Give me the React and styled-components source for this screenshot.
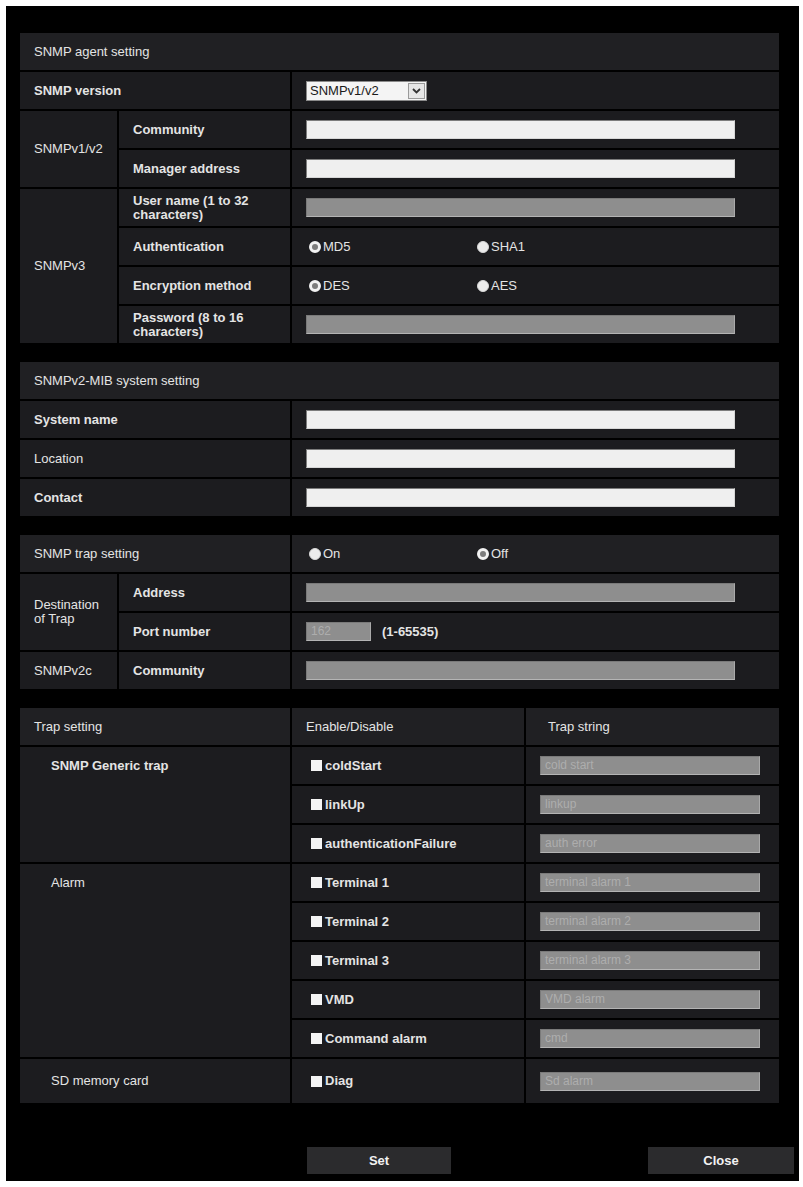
import styled, { createGlobalStyle } from "styled-components";

const GlobalStyle = createGlobalStyle`
  html, body {
    margin: 0;
    padding: 0;
    background: #fff;
  }
  body {
    font-family: "Liberation Sans", Arial, sans-serif;
    font-size: 13px;
    color: #e4e4e4;
  }
`;

const Frame = styled.div`
  margin: 6px 4px 6px 6px;
  height: 1175px;
  box-sizing: border-box;
  background: #000;
  padding: 27px 20px 0 14px;
  display: flex;
  flex-direction: column;
  gap: 19px;
`;

const Section = styled.div`
  display: grid;
  grid-template-columns: ${(p) => p.$cols};
  grid-auto-rows: 37px;
  gap: 2px;
`;

const Cell = styled.div`
  background: ${(p) => (p.$head ? "#202023" : "#1c1c1f")};
  display: flex;
  align-items: ${(p) => (p.$top ? "flex-start" : "center")};
  box-sizing: border-box;
  padding: ${(p) => (p.$top ? "12px" : "0")} 10px 0 ${(p) => p.$indent || 14}px;
  font-weight: ${(p) => (p.$bold ? 700 : 400)};
  line-height: 14px;
  grid-column: ${(p) => (p.$span ? `span ${p.$span}` : "auto")};
  grid-row: ${(p) => (p.$rows ? `span ${p.$rows}` : "auto")};
  ${(p) => p.$tall && "height: 44px;"}
`;

const TextField = styled.div`
  width: ${(p) => p.$w || 429}px;
  height: 19px;
  box-sizing: border-box;
  background: ${(p) => (p.$off ? "#8e8e8e" : "#efefef")};
  border: 1px solid;
  border-color: ${(p) =>
    p.$off ? "#7a7a7a #a9a9a9 #b4b4b4 #7a7a7a" : "#7c7c7c #d6d6d6 #d6d6d6 #7c7c7c"};
  color: #adadad;
  font-size: 12px;
  line-height: 17px;
  padding-left: 4px;
  white-space: nowrap;
  overflow: hidden;
`;

const Select = styled.div`
  width: 121px;
  height: 20px;
  box-sizing: border-box;
  background: #f4f4f4;
  border: 1px solid #8a8a8a;
  display: flex;
  align-items: center;
  justify-content: space-between;
  color: #1a1a1a;
  padding-left: 3px;
`;

const SelectArrow = styled.span`
  width: 17px;
  height: 16px;
  margin-right: 1px;
  box-sizing: border-box;
  border: 1px solid #9a9a9a;
  background: #e6e6e6;
  display: flex;
  align-items: center;
  justify-content: center;
`;

const Options = styled.div`
  display: flex;
  align-items: center;
  padding-left: 3px;
`;

const Option = styled.span`
  width: ${(p) => p.$w || 168}px;
  display: flex;
  align-items: center;
  gap: 2px;
`;

const RadioDot = styled.span`
  width: 12px;
  height: 12px;
  border-radius: 50%;
  box-sizing: border-box;
  background: ${(p) => (p.$checked ? "#7c7c7c" : "#ececec")};
  border: ${(p) => (p.$checked ? "3px solid #f2f2f2" : "1px solid #d8d8d8")};
  flex: none;
`;

const CheckBox = styled.span`
  width: 11px;
  height: 11px;
  background: #f4f4f4;
  flex: none;
`;

const CheckLabel = styled.span`
  display: flex;
  align-items: center;
  gap: 3px;
  font-weight: 700;
  padding-left: 5px;
`;

const Hint = styled.span`
  margin-left: 11px;
  font-weight: 700;
`;

const ButtonBar = styled.div`
  margin-top: 32px;
  margin-left: 287px;
  margin-right: -15px;
  display: flex;
  justify-content: space-between;
`;

const ActionButton = styled.button`
  width: ${(p) => p.$w}px;
  height: 27px;
  border: none;
  background: #2b2b2d;
  color: #f2f2f2;
  font-family: "Liberation Sans", Arial, sans-serif;
  font-weight: 700;
  font-size: 13px;
  padding: 0;
`;

function Radio({ label, checked, w }) {
  return (
    <Option $w={w}>
      <RadioDot $checked={checked} />
      {label}
    </Option>
  );
}

function Check({ label }) {
  return (
    <CheckLabel>
      <CheckBox />
      {label}
    </CheckLabel>
  );
}

const threeCols = "97px 171px 1fr";

const trapRows = [
  { group: "SNMP Generic trap", rows: 3, items: [["coldStart", "cold start"], ["linkUp", "linkup"], ["authenticationFailure", "auth error"]] },
  {
    group: "Alarm",
    rows: 5,
    items: [
      ["Terminal 1", "terminal alarm 1"],
      ["Terminal 2", "terminal alarm 2"],
      ["Terminal 3", "terminal alarm 3"],
      ["VMD", "VMD alarm"],
      ["Command alarm", "cmd"],
    ],
  },
];

export default function App() {
  return (
    <>
      <GlobalStyle />
      <Frame>
        <Section $cols={threeCols}>
          <Cell $head $span={3}>SNMP agent setting</Cell>
          <Cell $bold $span={2}>SNMP version</Cell>
          <Cell>
            <Select>
              SNMPv1/v2
              <SelectArrow>
                <svg width="9" height="6" viewBox="0 0 9 6">
                  <path d="M1 1l3.5 3.5L8 1" fill="none" stroke="#333" strokeWidth="1.8" />
                </svg>
              </SelectArrow>
            </Select>
          </Cell>
          <Cell $rows={2}>SNMPv1/v2</Cell>
          <Cell $bold>Community</Cell>
          <Cell><TextField /></Cell>
          <Cell $bold>Manager address</Cell>
          <Cell><TextField /></Cell>
          <Cell $rows={4}>SNMPv3</Cell>
          <Cell $bold>User name (1 to 32 characters)</Cell>
          <Cell><TextField $off /></Cell>
          <Cell $bold>Authentication</Cell>
          <Cell>
            <Options>
              <Radio label="MD5" checked />
              <Radio label="SHA1" />
            </Options>
          </Cell>
          <Cell $bold>Encryption method</Cell>
          <Cell>
            <Options>
              <Radio label="DES" checked />
              <Radio label="AES" />
            </Options>
          </Cell>
          <Cell $bold>Password (8 to 16 characters)</Cell>
          <Cell><TextField $off /></Cell>
        </Section>

        <Section $cols={threeCols}>
          <Cell $head $span={3}>SNMPv2-MIB system setting</Cell>
          <Cell $bold $span={2}>System name</Cell>
          <Cell><TextField /></Cell>
          <Cell $span={2}>Location</Cell>
          <Cell><TextField /></Cell>
          <Cell $bold $span={2}>Contact</Cell>
          <Cell><TextField /></Cell>
        </Section>

        <Section $cols={threeCols}>
          <Cell $head $span={2}>SNMP trap setting</Cell>
          <Cell $head>
            <Options>
              <Radio label="On" />
              <Radio label="Off" checked />
            </Options>
          </Cell>
          <Cell $rows={2}>Destination of Trap</Cell>
          <Cell $bold>Address</Cell>
          <Cell><TextField $off /></Cell>
          <Cell $bold>Port number</Cell>
          <Cell>
            <TextField $off $w={65}>162</TextField>
            <Hint>(1-65535)</Hint>
          </Cell>
          <Cell>SNMPv2c</Cell>
          <Cell $bold>Community</Cell>
          <Cell><TextField $off /></Cell>
        </Section>

        <Section $cols="270px 232px 1fr">
          <Cell $head>Trap setting</Cell>
          <Cell $head>Enable/Disable</Cell>
          <Cell $head $indent={22}>Trap string</Cell>
          {trapRows.map((g) => [
            <Cell key={g.group} $bold={g.rows === 3} $top $indent={31} $rows={g.rows}>
              {g.group}
            </Cell>,
            ...g.items.flatMap(([name, value]) => [
              <Cell key={name}><Check label={name} /></Cell>,
              <Cell key={name + "-str"}><TextField $off $w={220}>{value}</TextField></Cell>,
            ]),
          ])}
          <Cell $tall $indent={31}>SD memory card</Cell>
          <Cell $tall><Check label="Diag" /></Cell>
          <Cell $tall><TextField $off $w={220}>Sd alarm</TextField></Cell>
        </Section>

        <ButtonBar>
          <ActionButton $w={144}>Set</ActionButton>
          <ActionButton $w={146}>Close</ActionButton>
        </ButtonBar>
      </Frame>
    </>
  );
}
